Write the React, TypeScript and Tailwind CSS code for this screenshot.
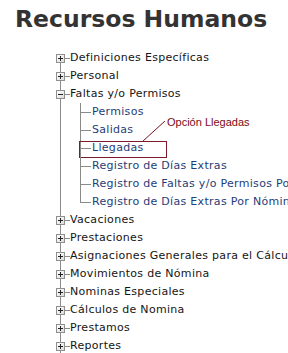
import React from 'react';

type Item = {
  label: string;
  open?: boolean;
  children?: string[];
};

const items: Item[] = [
  { label: 'Definiciones Específicas' },
  { label: 'Personal' },
  {
    label: 'Faltas y/o Permisos',
    open: true,
    children: [
      'Permisos',
      'Salidas',
      'Llegadas',
      'Registro de Días Extras',
      'Registro de Faltas y/o Permisos Por Nómina',
      'Registro de Días Extras Por Nómina',
    ],
  },
  { label: 'Vacaciones' },
  { label: 'Prestaciones' },
  { label: 'Asignaciones Generales para el Cálculo de Nómina' },
  { label: 'Movimientos de Nómina' },
  { label: 'Nominas Especiales' },
  { label: 'Cálculos de Nomina' },
  { label: 'Prestamos' },
  { label: 'Reportes' },
];

const font = { fontFamily: '"DejaVu Sans", Verdana, sans-serif' };

const ToggleBox = ({ open }: { open?: boolean }) => (
  <div className="relative z-10 flex h-[9px] w-[9px] shrink-0 items-center justify-center border border-[#8f8f8f] bg-gradient-to-br from-white to-[#dcdcdc]">
    <div className="absolute h-px w-[5px] bg-[#222]" />
    {!open && <div className="absolute h-[5px] w-px bg-[#222]" />}
  </div>
);

const MainLine = ({ first }: { first?: boolean }) => (
  <div
    className={`absolute left-[4px] w-px bg-[#8a8a8a] ${first ? 'top-1/2' : 'top-0'} bottom-0`}
  />
);

const Annotation = () => (
  <>
    <div className="pointer-events-none absolute left-[23px] top-[2px] h-[17px] w-[88px] border border-[#7b1b2b]" />
    <svg
      className="absolute left-[87px] top-[-18px]"
      width="22"
      height="20"
      viewBox="0 0 22 20"
    >
      <line x1="0" y1="20" x2="22" y2="0" stroke="#7a1422" strokeWidth="1" />
    </svg>
    <span
      className="absolute left-[111px] top-[-24px] text-[11px] leading-[14px] tracking-normal text-[#7a0a14]"
      style={{ fontFamily: '"Liberation Sans", Arial, sans-serif' }}
    >
      Opción Llegadas
    </span>
  </>
);

export default function App() {
  return (
    <div className="h-[353px] w-[288px] overflow-hidden bg-white" style={font}>
      <h1 className="mt-[7px] pl-[15px] text-[23.5px] font-bold leading-[24px] text-[#333]">
        Recursos Humanos
      </h1>

      <div className="mt-[18px] pl-[56px] text-[11px] tracking-[0.3px] whitespace-nowrap">
        {items.map((item, i) => (
          <React.Fragment key={item.label}>
            <div className="flex h-[18px] items-center">
              <div className="relative flex h-full w-[9px] shrink-0 items-center">
                <MainLine first={i === 0} />
                <ToggleBox open={item.open} />
              </div>
              <div className="h-px w-[5px] shrink-0 bg-[#8a8a8a]" />
              <span className="text-[#151515]">{item.label}</span>
            </div>

            {item.open &&
              item.children?.map((child, j) => {
                const last = j === (item.children?.length ?? 0) - 1;
                return (
                  <div key={child} className="relative flex h-[18px] items-center">
                    <div className="relative h-full w-[9px] shrink-0">
                      <MainLine />
                    </div>
                    <div className="w-[15px] shrink-0" />
                    <div className="relative h-full w-[11px] shrink-0">
                      <div
                        className={`absolute left-0 top-0 w-px bg-[#8a8a8a] ${last ? 'bottom-1/2' : 'bottom-0'}`}
                      />
                      <div className="absolute left-0 top-1/2 h-px w-[11px] bg-[#8a8a8a]" />
                    </div>
                    <span className="ml-[1px] text-[#1f3d78]">{child}</span>
                    {child === 'Llegadas' && <Annotation />}
                  </div>
                );
              })}
          </React.Fragment>
        ))}
      </div>
    </div>
  );
}
